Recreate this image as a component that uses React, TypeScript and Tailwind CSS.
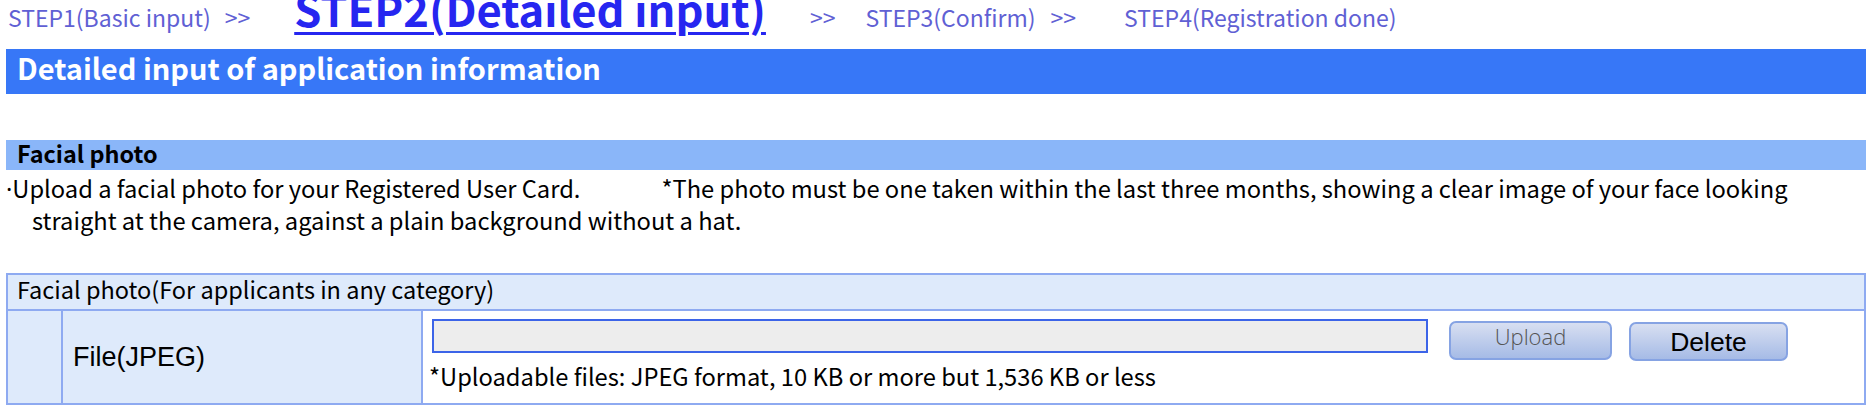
import React from "react";

export default function App() {
  return (
    <div className="w-[1870px] h-[412px] overflow-hidden bg-white font-['Noto_Sans_CJK_KR','Noto_Sans',sans-serif] text-black">
      {/* Step navigation */}
      <div className="flex items-baseline h-[49px] pl-[8px] text-[23px] text-[#6060d4] whitespace-nowrap">
        <span>STEP1(Basic input)</span>
        <span className="ml-[14px]">&gt;&gt;</span>
        <a
          href="#"
          className="ml-[44px] -mt-[14px] text-[43.5px] leading-none font-bold text-[#2626f0] underline decoration-[3px] underline-offset-[5px]"
        >
          STEP2(Detailed input)
        </a>
        <span className="ml-[44px]">&gt;&gt;</span>
        <span className="ml-[30px]">STEP3(Confirm)</span>
        <span className="ml-[15px]">&gt;&gt;</span>
        <span className="ml-[48px]">STEP4(Registration done)</span>
      </div>

      {/* Title bar */}
      <div className="ml-[6px] mr-[4px] h-[45px] bg-[#3777f7] pl-[11px] text-[29px] leading-[36px] font-bold text-white">
        Detailed input of application information
      </div>

      {/* Section bar */}
      <div className="ml-[6px] mr-[4px] mt-[46px] h-[30px] bg-[#8ab6f9] pl-[11px] text-[23.4px] leading-[26px] font-bold text-black">
        Facial photo
      </div>

      {/* Description */}
      <p className="mt-[3px] pl-[32px] -indent-[26px] text-[23.7px] leading-[31px] whitespace-nowrap">
        <span className="font-['Noto_Sans',sans-serif]">·</span>Upload a facial photo for your Registered User Card.
        <span className="inline-block w-[81px]" />
        *The photo must be one taken within the last three months, showing a clear image of your face looking
        <br />
        straight at the camera, against a plain background without a hat.
      </p>

      {/* Form box */}
      <div className="ml-[6px] mr-[4px] mt-[37px] border-2 border-[#8eaaf1] bg-[#deeafb]">
        <div className="h-[36px] border-b-2 border-[#8eaaf1] pl-[9px] pt-[2px] text-[23.5px] leading-[25px] whitespace-nowrap">
          Facial photo(For applicants in any category)
        </div>
        <div className="flex h-[92px]">
          <div className="w-[53px] shrink-0" />
          <div className="w-[362px] shrink-0 flex items-center border-x-2 border-[#8eaaf1] pl-[10px] font-['Liberation_Sans',Arial,sans-serif] text-[27px]">
            File(JPEG)
          </div>
          <div className="flex-1 bg-white pl-[9px] pt-[8px]">
            <div className="flex items-start">
              <div className="w-[996px] h-[34px] border-2 border-[#3c64e8] bg-[#ededed]" />
              <button
                type="button"
                className="ml-[21px] mt-[2px] w-[163px] h-[39px] rounded-[7px] border-2 border-[#86a3e3] bg-gradient-to-b from-[#d8dff1] to-[#a6bbe6] pb-[9px] font-['Open_Sans',sans-serif] font-light text-[22px] leading-[26px] text-[#555555]"
              >
                Upload
              </button>
              <button
                type="button"
                className="ml-[17px] mt-[3px] w-[159px] h-[39px] rounded-[7px] border-2 border-[#86a3e3] bg-gradient-to-b from-[#d8dff1] to-[#a6bbe6] font-['Liberation_Sans',Arial,sans-serif] text-[26.5px] leading-[30px] text-black"
              >
                Delete
              </button>
            </div>
            <div className="mt-[3px] -ml-[3px] text-[23.7px] leading-[25px] whitespace-nowrap">
              *Uploadable files: JPEG format, 10 KB or more but 1,536 KB or less
            </div>
          </div>
        </div>
      </div>
    </div>
  );
}
